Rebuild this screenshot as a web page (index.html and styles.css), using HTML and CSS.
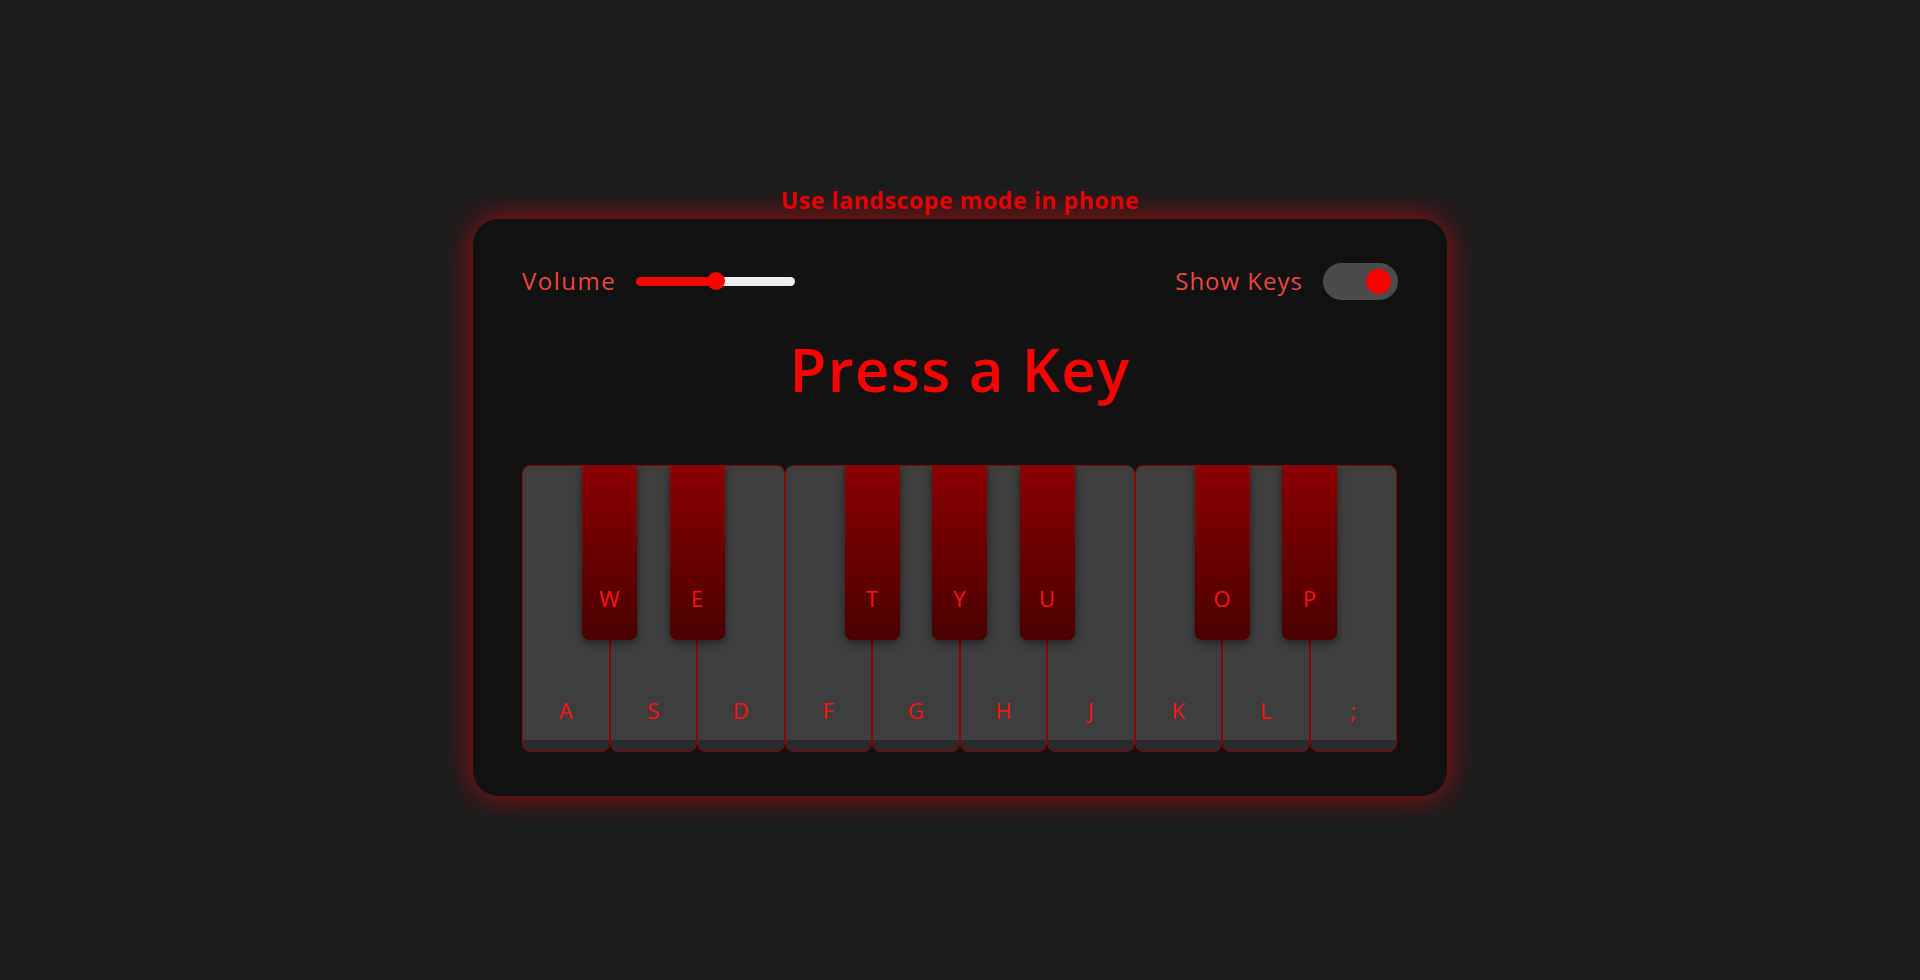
FILE: index.html
```html
<!DOCTYPE html>
<html lang="en">
<head>
<meta charset="utf-8">
<title>Playable Piano</title>
<link rel="stylesheet" href="styles.css">
</head>
<body>
  <main class="stage">
    <h3 class="hint">Use landscope mode in phone</h3>
    <section class="wrapper">
      <header class="controls">
        <div class="column volume-slider">
          <span class="ctl-label ctl-label-wide">Volume</span>
          <input class="range" type="range" min="0" max="1" value="0.5" step="any">
        </div>
        <div class="column keys-checkbox">
          <span class="ctl-label">Show Keys</span>
          <div class="toggle"><span class="knob"></span></div>
        </div>
      </header>
      <h1 class="display">Press a Key</h1>
      <ul class="piano-keys">
        <li class="key white"><span>a</span></li>
        <li class="key black"><span>w</span></li>
        <li class="key white"><span>s</span></li>
        <li class="key black"><span>e</span></li>
        <li class="key white"><span>d</span></li>
        <li class="key white"><span>f</span></li>
        <li class="key black"><span>t</span></li>
        <li class="key white"><span>g</span></li>
        <li class="key black"><span>y</span></li>
        <li class="key white"><span>h</span></li>
        <li class="key black"><span>u</span></li>
        <li class="key white"><span>j</span></li>
        <li class="key white"><span>k</span></li>
        <li class="key black"><span>o</span></li>
        <li class="key white"><span>l</span></li>
        <li class="key black"><span>p</span></li>
        <li class="key white"><span>;</span></li>
      </ul>
    </section>
  </main>
</body>
</html>
```

FILE: styles.css
```css
* {
  box-sizing: border-box;
}

html, body {
  margin: 0;
  padding: 0;
}

body {
  background: #1d1d1d;
  font-family: "Open Sans", "Liberation Sans", sans-serif;
  overflow: hidden;
}

.stage {
  height: 100vh;
  display: flex;
  flex-direction: column;
  align-items: center;
  justify-content: center;
  padding-top: 2px;
}

.hint {
  margin: 0 0 6px;
  font-size: 23px;
  line-height: 26px;
  font-weight: 700;
  color: #e60000;
  letter-spacing: 0.6px;
}

.wrapper {
  width: 974px;
  height: 577px;
  padding: 44px 49px;
  background: #121212;
  border-radius: 26px;
  box-shadow: 0 0 30px rgba(255, 0, 0, 0.6);
}

.controls {
  display: flex;
  align-items: center;
  justify-content: space-between;
  height: 37px;
}

.column {
  display: flex;
  align-items: center;
  gap: 20px;
}

.ctl-label {
  font-size: 24px;
  line-height: 30px;
  color: #e8483a;
  letter-spacing: 1px;
}

.ctl-label-wide {
  letter-spacing: 1.5px;
}

.range {
  -webkit-appearance: none;
  appearance: none;
  width: 159px;
  height: 9px;
  margin: 0;
  border-radius: 5px;
  outline: none;
  background: linear-gradient(to right, #ff0000 50%, #eeeeee 50%);
}

.range::-webkit-slider-thumb {
  -webkit-appearance: none;
  appearance: none;
  width: 18px;
  height: 18px;
  border-radius: 50%;
  background: #ff0000;
  border: none;
}

.toggle {
  width: 75px;
  height: 37px;
  border-radius: 19px;
  background: #4b4b4b;
  display: flex;
  align-items: center;
  justify-content: flex-end;
  padding: 0 7px;
}

.knob {
  width: 25px;
  height: 25px;
  border-radius: 50%;
  background: #ff0000;
}

.display {
  margin: 39px 0 0;
  text-align: center;
  font-size: 60px;
  line-height: 60px;
  font-weight: 600;
  color: #ff0000;
  letter-spacing: 1.3px;
}

.piano-keys {
  display: flex;
  list-style: none;
  margin: 66px 0 0;
  padding: 0;
}

.key {
  position: relative;
  display: flex;
  flex-direction: column;
  justify-content: flex-end;
  align-items: center;
  text-transform: uppercase;
  font-size: 22px;
  line-height: 22px;
  color: #ff1010;
}

.white {
  flex: 0 0 87.5px;
  height: 287px;
  border: 1px solid #8b0000;
  border-radius: 8px;
  background: linear-gradient(#3e3e3e 96%, #2b2b2b 96%);
  padding-bottom: 30px;
}

.black {
  z-index: 2;
  flex: 0 0 55px;
  height: 175px;
  margin: 0 -27.5px;
  border-radius: 0 0 7px 7px;
  background: linear-gradient(#8b0000, #4a0000);
  box-shadow: 0 3px 8px rgba(0, 0, 0, 0.45);
  padding-bottom: 31px;
}
```
